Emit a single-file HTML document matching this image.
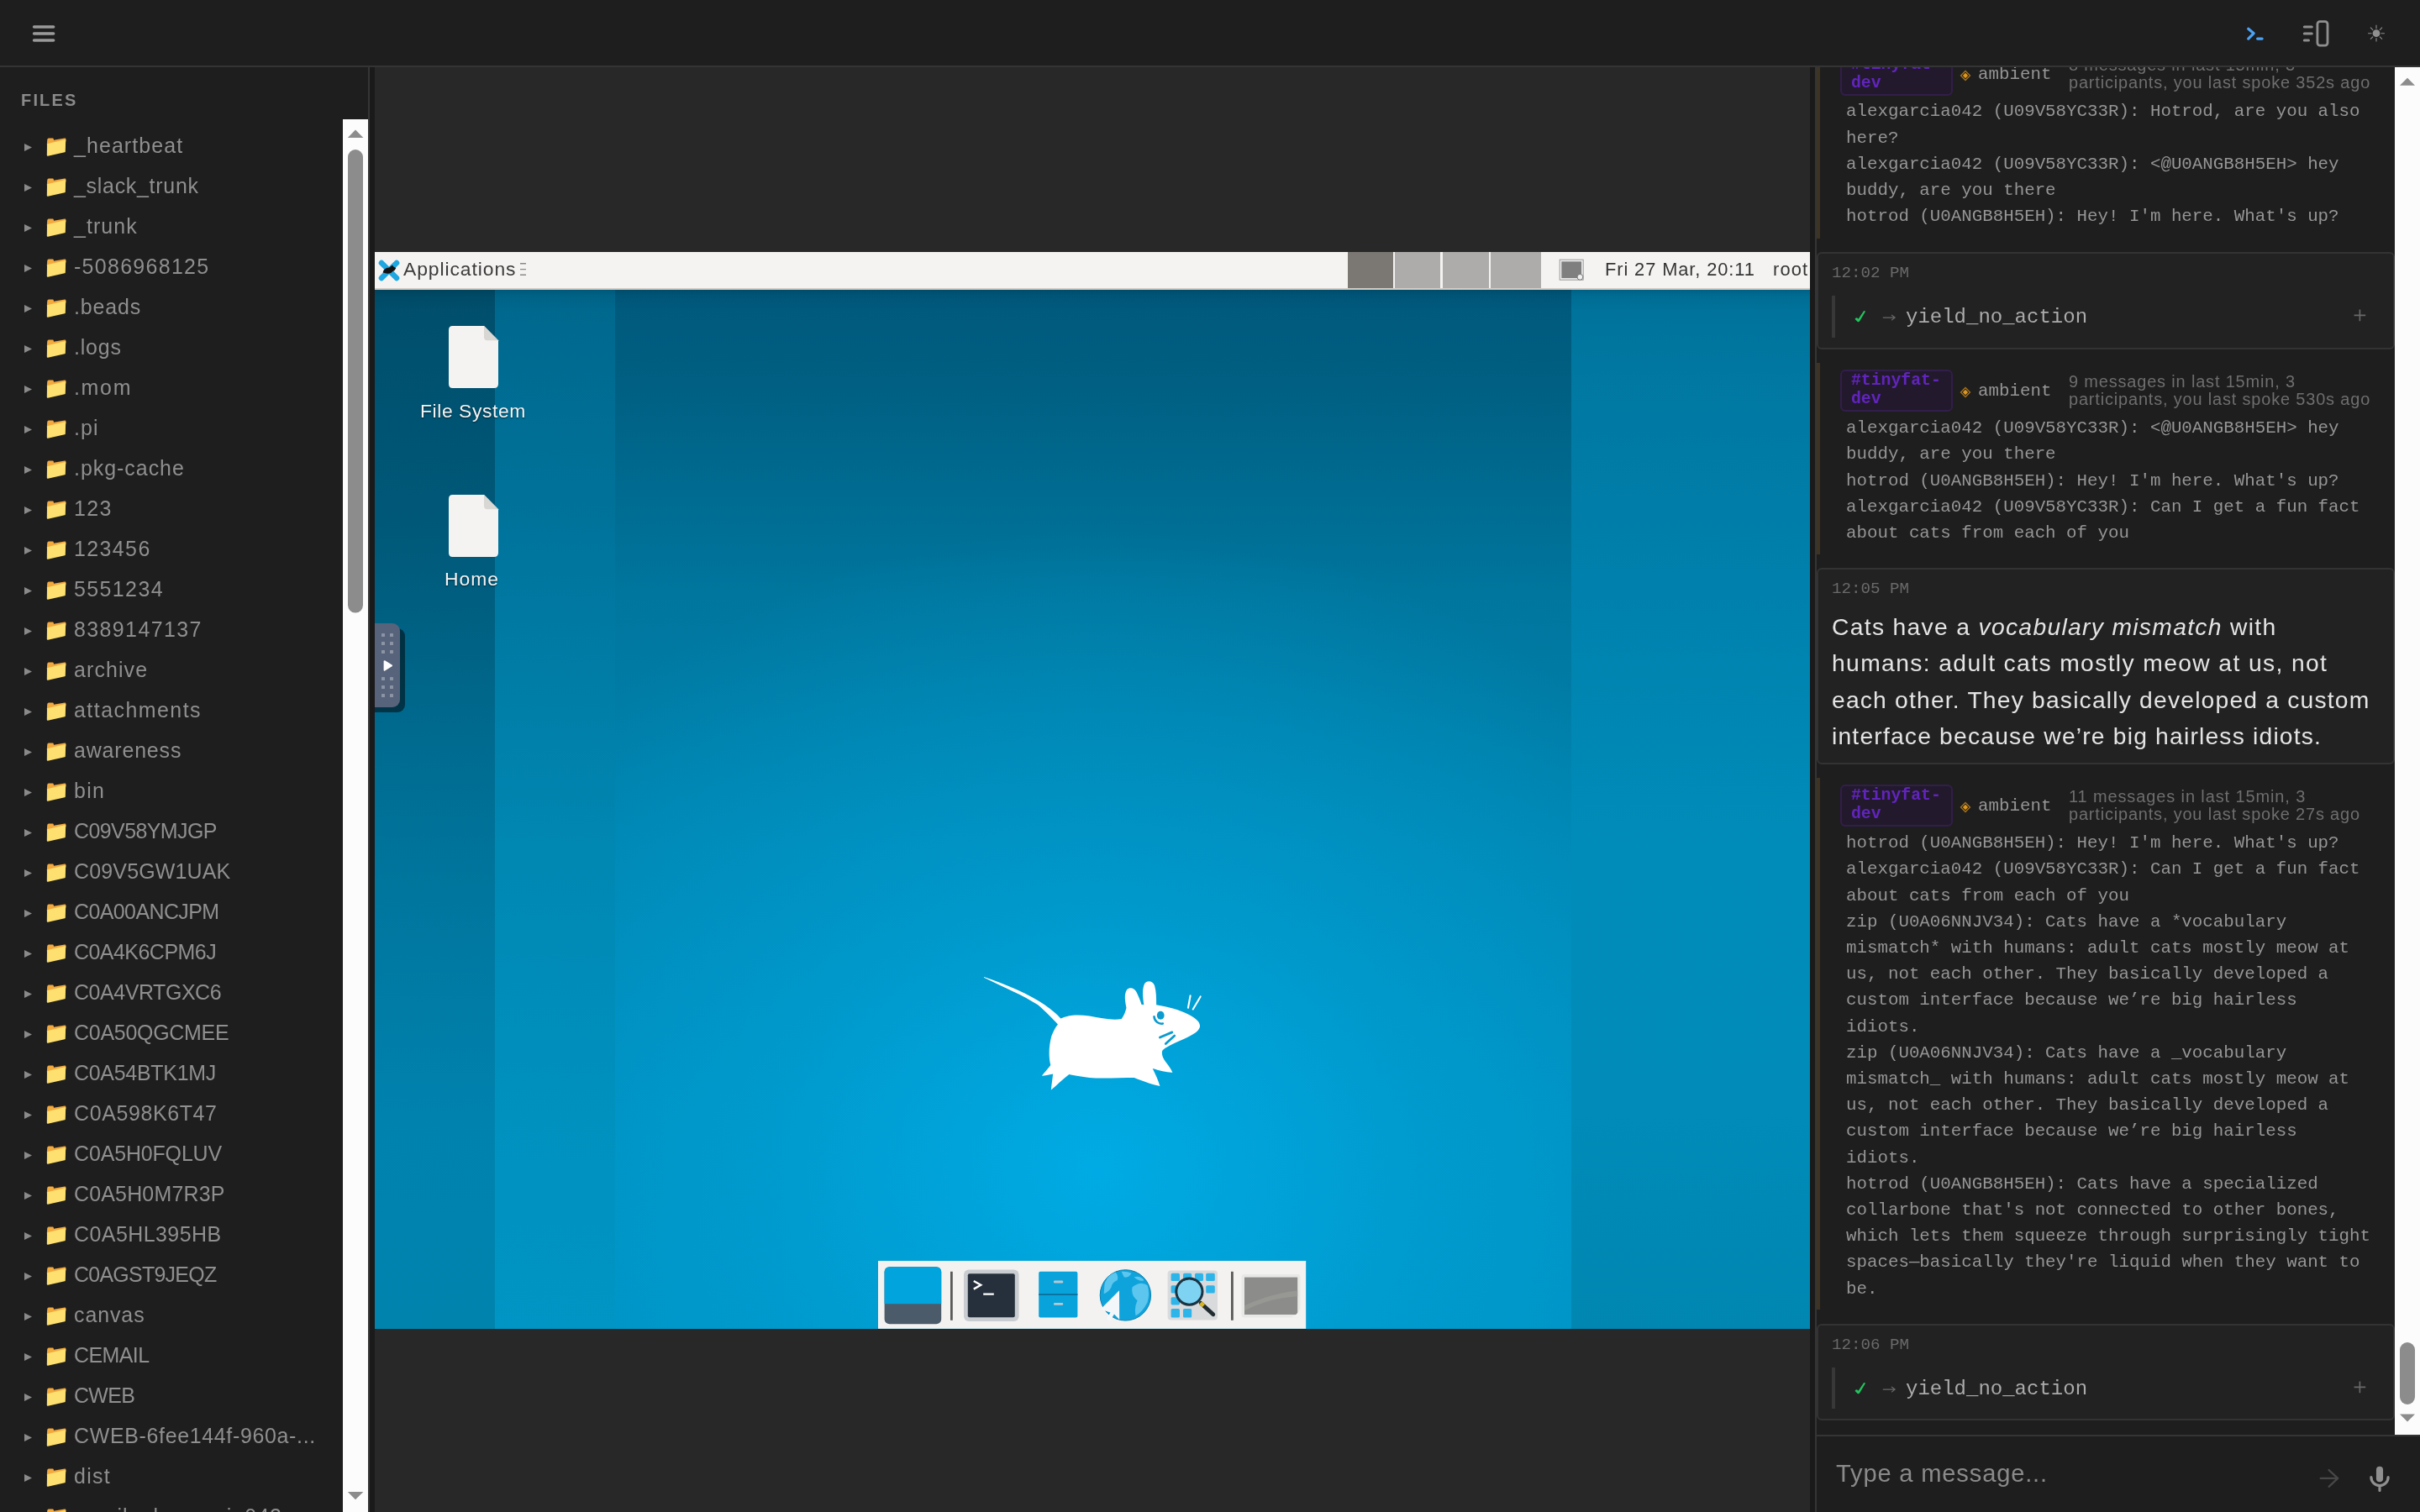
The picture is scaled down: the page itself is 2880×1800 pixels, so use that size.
<!DOCTYPE html><html><head><meta charset="utf-8"><style>
html,body{margin:0;padding:0;}
body{width:1440px;height:900px;overflow:hidden;background:#1f1f1f;position:relative;font-family:"Liberation Sans",sans-serif;}
@media (min-width:2000px){html{zoom:2}}
.a{position:absolute;box-sizing:border-box}
.t{position:absolute;white-space:pre;font-family:"Liberation Sans",sans-serif;will-change:transform}
.m{position:absolute;white-space:pre;font-family:"Liberation Mono",monospace;will-change:transform}
svg{position:absolute;overflow:visible}
</style></head><body>
<div class="a" style="left:0px;top:0px;width:1440px;height:40px;background:#1e1e1e;border-bottom:1px solid #343434"></div>
<svg style="left:0;top:0" width="40" height="40"><path d="M20.3 16h11.5M20.3 20h11.5M20.3 24h11.5" stroke="#9a9a9a" stroke-width="1.8" stroke-linecap="round"/></svg>
<svg style="left:1320px;top:0" width="120" height="40"><path d="M17.85 17.1L21.07 19.83L17.85 23.05M23.3 23.05h2.75" fill="none" stroke="#4aa3f5" stroke-width="1.6" stroke-linecap="round" stroke-linejoin="round"/><path d="M51.2 16h4.4M51.2 20h4.4M51.2 24h2.5" stroke="#8f8f8f" stroke-width="1.6" stroke-linecap="round"/><rect x="58.95" y="12.85" width="6.05" height="14.2" rx="1.5" fill="none" stroke="#8f8f8f" stroke-width="1.4"/><circle cx="94" cy="19.85" r="2.2" fill="#8f8f8f"/><path d="M94 14.9v2.2M94 22.6v2.2M89.05 19.85h2.2M96.75 19.85h2.2M90.5 16.35l1.55 1.55M95.95 21.8l1.55 1.55M97.5 16.35l-1.55 1.55M92.05 21.8l-1.55 1.55" stroke="#8f8f8f" stroke-width="0.55"/></svg>
<div class="a" style="left:0px;top:40px;width:219px;height:860px;background:#1e1e1e"></div>
<div class="a" style="left:219px;top:40px;width:1px;height:860px;background:#353535"></div>
<div class="a" style="left:220px;top:40px;width:3px;height:860px;background:#1a1a1a"></div>
<div class="t" style="left:12.70px;top:53.64px;font-size:9.98px;line-height:12px;letter-spacing:1.100px;color:#8a8a8a;font-weight:700;font-style:normal;">FILES</div>
<svg style="left:14.5px;top:85.45px" width="5" height="5"><path d="M0 0L4.5 2.25L0 4.5Z" fill="#8a8a8a"/></svg>
<svg style="left:27.5px;top:81.85px" width="12" height="11" viewBox="0 0 12 11"><path d="M0.4 4.2 L0.6 1.3 Q0.7 0.3 1.5 0.3 L3.9 0.2 Q4.3 0.2 4.4 0.7 L4.5 1.4 L11.0 0.3 Q11.7 0.2 11.7 0.9 L11.7 2.2 Z" fill="#f2a93e"/><path d="M0.5 3.6 L11.6 0.95 L11.4 8.1 Q11.4 8.5 11.0 8.6 L1.0 10.9 Q0.4 11.0 0.4 10.4 Z" fill="#fde06f"/></svg>
<div class="t" style="left:44.10px;top:78.53px;font-size:12.48px;line-height:16px;letter-spacing:0.542px;color:#8f8f8f;font-weight:400;font-style:normal;">_heartbeat</div>
<svg style="left:14.5px;top:109.45px" width="5" height="5"><path d="M0 0L4.5 2.25L0 4.5Z" fill="#8a8a8a"/></svg>
<svg style="left:27.5px;top:105.85px" width="12" height="11" viewBox="0 0 12 11"><path d="M0.4 4.2 L0.6 1.3 Q0.7 0.3 1.5 0.3 L3.9 0.2 Q4.3 0.2 4.4 0.7 L4.5 1.4 L11.0 0.3 Q11.7 0.2 11.7 0.9 L11.7 2.2 Z" fill="#f2a93e"/><path d="M0.5 3.6 L11.6 0.95 L11.4 8.1 Q11.4 8.5 11.0 8.6 L1.0 10.9 Q0.4 11.0 0.4 10.4 Z" fill="#fde06f"/></svg>
<div class="t" style="left:44.10px;top:102.53px;font-size:12.48px;line-height:16px;letter-spacing:0.358px;color:#8f8f8f;font-weight:400;font-style:normal;">_slack_trunk</div>
<svg style="left:14.5px;top:133.45px" width="5" height="5"><path d="M0 0L4.5 2.25L0 4.5Z" fill="#8a8a8a"/></svg>
<svg style="left:27.5px;top:129.85px" width="12" height="11" viewBox="0 0 12 11"><path d="M0.4 4.2 L0.6 1.3 Q0.7 0.3 1.5 0.3 L3.9 0.2 Q4.3 0.2 4.4 0.7 L4.5 1.4 L11.0 0.3 Q11.7 0.2 11.7 0.9 L11.7 2.2 Z" fill="#f2a93e"/><path d="M0.5 3.6 L11.6 0.95 L11.4 8.1 Q11.4 8.5 11.0 8.6 L1.0 10.9 Q0.4 11.0 0.4 10.4 Z" fill="#fde06f"/></svg>
<div class="t" style="left:44.10px;top:126.53px;font-size:12.48px;line-height:16px;letter-spacing:0.526px;color:#8f8f8f;font-weight:400;font-style:normal;">_trunk</div>
<svg style="left:14.5px;top:157.45px" width="5" height="5"><path d="M0 0L4.5 2.25L0 4.5Z" fill="#8a8a8a"/></svg>
<svg style="left:27.5px;top:153.85px" width="12" height="11" viewBox="0 0 12 11"><path d="M0.4 4.2 L0.6 1.3 Q0.7 0.3 1.5 0.3 L3.9 0.2 Q4.3 0.2 4.4 0.7 L4.5 1.4 L11.0 0.3 Q11.7 0.2 11.7 0.9 L11.7 2.2 Z" fill="#f2a93e"/><path d="M0.5 3.6 L11.6 0.95 L11.4 8.1 Q11.4 8.5 11.0 8.6 L1.0 10.9 Q0.4 11.0 0.4 10.4 Z" fill="#fde06f"/></svg>
<div class="t" style="left:44.10px;top:150.53px;font-size:12.48px;line-height:16px;letter-spacing:0.653px;color:#8f8f8f;font-weight:400;font-style:normal;">-5086968125</div>
<svg style="left:14.5px;top:181.45px" width="5" height="5"><path d="M0 0L4.5 2.25L0 4.5Z" fill="#8a8a8a"/></svg>
<svg style="left:27.5px;top:177.85px" width="12" height="11" viewBox="0 0 12 11"><path d="M0.4 4.2 L0.6 1.3 Q0.7 0.3 1.5 0.3 L3.9 0.2 Q4.3 0.2 4.4 0.7 L4.5 1.4 L11.0 0.3 Q11.7 0.2 11.7 0.9 L11.7 2.2 Z" fill="#f2a93e"/><path d="M0.5 3.6 L11.6 0.95 L11.4 8.1 Q11.4 8.5 11.0 8.6 L1.0 10.9 Q0.4 11.0 0.4 10.4 Z" fill="#fde06f"/></svg>
<div class="t" style="left:44.10px;top:174.53px;font-size:12.48px;line-height:16px;letter-spacing:0.435px;color:#8f8f8f;font-weight:400;font-style:normal;">.beads</div>
<svg style="left:14.5px;top:205.45px" width="5" height="5"><path d="M0 0L4.5 2.25L0 4.5Z" fill="#8a8a8a"/></svg>
<svg style="left:27.5px;top:201.85px" width="12" height="11" viewBox="0 0 12 11"><path d="M0.4 4.2 L0.6 1.3 Q0.7 0.3 1.5 0.3 L3.9 0.2 Q4.3 0.2 4.4 0.7 L4.5 1.4 L11.0 0.3 Q11.7 0.2 11.7 0.9 L11.7 2.2 Z" fill="#f2a93e"/><path d="M0.5 3.6 L11.6 0.95 L11.4 8.1 Q11.4 8.5 11.0 8.6 L1.0 10.9 Q0.4 11.0 0.4 10.4 Z" fill="#fde06f"/></svg>
<div class="t" style="left:44.10px;top:198.53px;font-size:12.48px;line-height:16px;letter-spacing:0.403px;color:#8f8f8f;font-weight:400;font-style:normal;">.logs</div>
<svg style="left:14.5px;top:229.45px" width="5" height="5"><path d="M0 0L4.5 2.25L0 4.5Z" fill="#8a8a8a"/></svg>
<svg style="left:27.5px;top:225.85px" width="12" height="11" viewBox="0 0 12 11"><path d="M0.4 4.2 L0.6 1.3 Q0.7 0.3 1.5 0.3 L3.9 0.2 Q4.3 0.2 4.4 0.7 L4.5 1.4 L11.0 0.3 Q11.7 0.2 11.7 0.9 L11.7 2.2 Z" fill="#f2a93e"/><path d="M0.5 3.6 L11.6 0.95 L11.4 8.1 Q11.4 8.5 11.0 8.6 L1.0 10.9 Q0.4 11.0 0.4 10.4 Z" fill="#fde06f"/></svg>
<div class="t" style="left:44.10px;top:222.53px;font-size:12.48px;line-height:16px;letter-spacing:0.844px;color:#8f8f8f;font-weight:400;font-style:normal;">.mom</div>
<svg style="left:14.5px;top:253.45px" width="5" height="5"><path d="M0 0L4.5 2.25L0 4.5Z" fill="#8a8a8a"/></svg>
<svg style="left:27.5px;top:249.85px" width="12" height="11" viewBox="0 0 12 11"><path d="M0.4 4.2 L0.6 1.3 Q0.7 0.3 1.5 0.3 L3.9 0.2 Q4.3 0.2 4.4 0.7 L4.5 1.4 L11.0 0.3 Q11.7 0.2 11.7 0.9 L11.7 2.2 Z" fill="#f2a93e"/><path d="M0.5 3.6 L11.6 0.95 L11.4 8.1 Q11.4 8.5 11.0 8.6 L1.0 10.9 Q0.4 11.0 0.4 10.4 Z" fill="#fde06f"/></svg>
<div class="t" style="left:44.10px;top:246.53px;font-size:12.48px;line-height:16px;letter-spacing:0.531px;color:#8f8f8f;font-weight:400;font-style:normal;">.pi</div>
<svg style="left:14.5px;top:277.45px" width="5" height="5"><path d="M0 0L4.5 2.25L0 4.5Z" fill="#8a8a8a"/></svg>
<svg style="left:27.5px;top:273.85px" width="12" height="11" viewBox="0 0 12 11"><path d="M0.4 4.2 L0.6 1.3 Q0.7 0.3 1.5 0.3 L3.9 0.2 Q4.3 0.2 4.4 0.7 L4.5 1.4 L11.0 0.3 Q11.7 0.2 11.7 0.9 L11.7 2.2 Z" fill="#f2a93e"/><path d="M0.5 3.6 L11.6 0.95 L11.4 8.1 Q11.4 8.5 11.0 8.6 L1.0 10.9 Q0.4 11.0 0.4 10.4 Z" fill="#fde06f"/></svg>
<div class="t" style="left:44.10px;top:270.53px;font-size:12.48px;line-height:16px;letter-spacing:0.487px;color:#8f8f8f;font-weight:400;font-style:normal;">.pkg-cache</div>
<svg style="left:14.5px;top:301.45px" width="5" height="5"><path d="M0 0L4.5 2.25L0 4.5Z" fill="#8a8a8a"/></svg>
<svg style="left:27.5px;top:297.85px" width="12" height="11" viewBox="0 0 12 11"><path d="M0.4 4.2 L0.6 1.3 Q0.7 0.3 1.5 0.3 L3.9 0.2 Q4.3 0.2 4.4 0.7 L4.5 1.4 L11.0 0.3 Q11.7 0.2 11.7 0.9 L11.7 2.2 Z" fill="#f2a93e"/><path d="M0.5 3.6 L11.6 0.95 L11.4 8.1 Q11.4 8.5 11.0 8.6 L1.0 10.9 Q0.4 11.0 0.4 10.4 Z" fill="#fde06f"/></svg>
<div class="t" style="left:44.10px;top:294.53px;font-size:12.48px;line-height:16px;letter-spacing:0.698px;color:#8f8f8f;font-weight:400;font-style:normal;">123</div>
<svg style="left:14.5px;top:325.45px" width="5" height="5"><path d="M0 0L4.5 2.25L0 4.5Z" fill="#8a8a8a"/></svg>
<svg style="left:27.5px;top:321.85px" width="12" height="11" viewBox="0 0 12 11"><path d="M0.4 4.2 L0.6 1.3 Q0.7 0.3 1.5 0.3 L3.9 0.2 Q4.3 0.2 4.4 0.7 L4.5 1.4 L11.0 0.3 Q11.7 0.2 11.7 0.9 L11.7 2.2 Z" fill="#f2a93e"/><path d="M0.5 3.6 L11.6 0.95 L11.4 8.1 Q11.4 8.5 11.0 8.6 L1.0 10.9 Q0.4 11.0 0.4 10.4 Z" fill="#fde06f"/></svg>
<div class="t" style="left:44.10px;top:318.53px;font-size:12.48px;line-height:16px;letter-spacing:0.701px;color:#8f8f8f;font-weight:400;font-style:normal;">123456</div>
<svg style="left:14.5px;top:349.45px" width="5" height="5"><path d="M0 0L4.5 2.25L0 4.5Z" fill="#8a8a8a"/></svg>
<svg style="left:27.5px;top:345.85px" width="12" height="11" viewBox="0 0 12 11"><path d="M0.4 4.2 L0.6 1.3 Q0.7 0.3 1.5 0.3 L3.9 0.2 Q4.3 0.2 4.4 0.7 L4.5 1.4 L11.0 0.3 Q11.7 0.2 11.7 0.9 L11.7 2.2 Z" fill="#f2a93e"/><path d="M0.5 3.6 L11.6 0.95 L11.4 8.1 Q11.4 8.5 11.0 8.6 L1.0 10.9 Q0.4 11.0 0.4 10.4 Z" fill="#fde06f"/></svg>
<div class="t" style="left:44.10px;top:342.53px;font-size:12.48px;line-height:16px;letter-spacing:0.701px;color:#8f8f8f;font-weight:400;font-style:normal;">5551234</div>
<svg style="left:14.5px;top:373.45px" width="5" height="5"><path d="M0 0L4.5 2.25L0 4.5Z" fill="#8a8a8a"/></svg>
<svg style="left:27.5px;top:369.85px" width="12" height="11" viewBox="0 0 12 11"><path d="M0.4 4.2 L0.6 1.3 Q0.7 0.3 1.5 0.3 L3.9 0.2 Q4.3 0.2 4.4 0.7 L4.5 1.4 L11.0 0.3 Q11.7 0.2 11.7 0.9 L11.7 2.2 Z" fill="#f2a93e"/><path d="M0.5 3.6 L11.6 0.95 L11.4 8.1 Q11.4 8.5 11.0 8.6 L1.0 10.9 Q0.4 11.0 0.4 10.4 Z" fill="#fde06f"/></svg>
<div class="t" style="left:44.10px;top:366.53px;font-size:12.48px;line-height:16px;letter-spacing:0.700px;color:#8f8f8f;font-weight:400;font-style:normal;">8389147137</div>
<svg style="left:14.5px;top:397.45px" width="5" height="5"><path d="M0 0L4.5 2.25L0 4.5Z" fill="#8a8a8a"/></svg>
<svg style="left:27.5px;top:393.85px" width="12" height="11" viewBox="0 0 12 11"><path d="M0.4 4.2 L0.6 1.3 Q0.7 0.3 1.5 0.3 L3.9 0.2 Q4.3 0.2 4.4 0.7 L4.5 1.4 L11.0 0.3 Q11.7 0.2 11.7 0.9 L11.7 2.2 Z" fill="#f2a93e"/><path d="M0.5 3.6 L11.6 0.95 L11.4 8.1 Q11.4 8.5 11.0 8.6 L1.0 10.9 Q0.4 11.0 0.4 10.4 Z" fill="#fde06f"/></svg>
<div class="t" style="left:44.10px;top:390.53px;font-size:12.48px;line-height:16px;letter-spacing:0.549px;color:#8f8f8f;font-weight:400;font-style:normal;">archive</div>
<svg style="left:14.5px;top:421.45px" width="5" height="5"><path d="M0 0L4.5 2.25L0 4.5Z" fill="#8a8a8a"/></svg>
<svg style="left:27.5px;top:417.85px" width="12" height="11" viewBox="0 0 12 11"><path d="M0.4 4.2 L0.6 1.3 Q0.7 0.3 1.5 0.3 L3.9 0.2 Q4.3 0.2 4.4 0.7 L4.5 1.4 L11.0 0.3 Q11.7 0.2 11.7 0.9 L11.7 2.2 Z" fill="#f2a93e"/><path d="M0.5 3.6 L11.6 0.95 L11.4 8.1 Q11.4 8.5 11.0 8.6 L1.0 10.9 Q0.4 11.0 0.4 10.4 Z" fill="#fde06f"/></svg>
<div class="t" style="left:44.10px;top:414.53px;font-size:12.48px;line-height:16px;letter-spacing:0.732px;color:#8f8f8f;font-weight:400;font-style:normal;">attachments</div>
<svg style="left:14.5px;top:445.45px" width="5" height="5"><path d="M0 0L4.5 2.25L0 4.5Z" fill="#8a8a8a"/></svg>
<svg style="left:27.5px;top:441.85px" width="12" height="11" viewBox="0 0 12 11"><path d="M0.4 4.2 L0.6 1.3 Q0.7 0.3 1.5 0.3 L3.9 0.2 Q4.3 0.2 4.4 0.7 L4.5 1.4 L11.0 0.3 Q11.7 0.2 11.7 0.9 L11.7 2.2 Z" fill="#f2a93e"/><path d="M0.5 3.6 L11.6 0.95 L11.4 8.1 Q11.4 8.5 11.0 8.6 L1.0 10.9 Q0.4 11.0 0.4 10.4 Z" fill="#fde06f"/></svg>
<div class="t" style="left:44.10px;top:438.53px;font-size:12.48px;line-height:16px;letter-spacing:0.418px;color:#8f8f8f;font-weight:400;font-style:normal;">awareness</div>
<svg style="left:14.5px;top:469.45px" width="5" height="5"><path d="M0 0L4.5 2.25L0 4.5Z" fill="#8a8a8a"/></svg>
<svg style="left:27.5px;top:465.85px" width="12" height="11" viewBox="0 0 12 11"><path d="M0.4 4.2 L0.6 1.3 Q0.7 0.3 1.5 0.3 L3.9 0.2 Q4.3 0.2 4.4 0.7 L4.5 1.4 L11.0 0.3 Q11.7 0.2 11.7 0.9 L11.7 2.2 Z" fill="#f2a93e"/><path d="M0.5 3.6 L11.6 0.95 L11.4 8.1 Q11.4 8.5 11.0 8.6 L1.0 10.9 Q0.4 11.0 0.4 10.4 Z" fill="#fde06f"/></svg>
<div class="t" style="left:44.10px;top:462.53px;font-size:12.48px;line-height:16px;letter-spacing:0.641px;color:#8f8f8f;font-weight:400;font-style:normal;">bin</div>
<svg style="left:14.5px;top:493.45px" width="5" height="5"><path d="M0 0L4.5 2.25L0 4.5Z" fill="#8a8a8a"/></svg>
<svg style="left:27.5px;top:489.85px" width="12" height="11" viewBox="0 0 12 11"><path d="M0.4 4.2 L0.6 1.3 Q0.7 0.3 1.5 0.3 L3.9 0.2 Q4.3 0.2 4.4 0.7 L4.5 1.4 L11.0 0.3 Q11.7 0.2 11.7 0.9 L11.7 2.2 Z" fill="#f2a93e"/><path d="M0.5 3.6 L11.6 0.95 L11.4 8.1 Q11.4 8.5 11.0 8.6 L1.0 10.9 Q0.4 11.0 0.4 10.4 Z" fill="#fde06f"/></svg>
<div class="t" style="left:44.10px;top:486.53px;font-size:12.48px;line-height:16px;letter-spacing:-0.284px;color:#8f8f8f;font-weight:400;font-style:normal;">C09V58YMJGP</div>
<svg style="left:14.5px;top:517.45px" width="5" height="5"><path d="M0 0L4.5 2.25L0 4.5Z" fill="#8a8a8a"/></svg>
<svg style="left:27.5px;top:513.85px" width="12" height="11" viewBox="0 0 12 11"><path d="M0.4 4.2 L0.6 1.3 Q0.7 0.3 1.5 0.3 L3.9 0.2 Q4.3 0.2 4.4 0.7 L4.5 1.4 L11.0 0.3 Q11.7 0.2 11.7 0.9 L11.7 2.2 Z" fill="#f2a93e"/><path d="M0.5 3.6 L11.6 0.95 L11.4 8.1 Q11.4 8.5 11.0 8.6 L1.0 10.9 Q0.4 11.0 0.4 10.4 Z" fill="#fde06f"/></svg>
<div class="t" style="left:44.10px;top:510.53px;font-size:12.48px;line-height:16px;letter-spacing:0.089px;color:#8f8f8f;font-weight:400;font-style:normal;">C09V5GW1UAK</div>
<svg style="left:14.5px;top:541.45px" width="5" height="5"><path d="M0 0L4.5 2.25L0 4.5Z" fill="#8a8a8a"/></svg>
<svg style="left:27.5px;top:537.85px" width="12" height="11" viewBox="0 0 12 11"><path d="M0.4 4.2 L0.6 1.3 Q0.7 0.3 1.5 0.3 L3.9 0.2 Q4.3 0.2 4.4 0.7 L4.5 1.4 L11.0 0.3 Q11.7 0.2 11.7 0.9 L11.7 2.2 Z" fill="#f2a93e"/><path d="M0.5 3.6 L11.6 0.95 L11.4 8.1 Q11.4 8.5 11.0 8.6 L1.0 10.9 Q0.4 11.0 0.4 10.4 Z" fill="#fde06f"/></svg>
<div class="t" style="left:44.10px;top:534.53px;font-size:12.48px;line-height:16px;letter-spacing:-0.291px;color:#8f8f8f;font-weight:400;font-style:normal;">C0A00ANCJPM</div>
<svg style="left:14.5px;top:565.45px" width="5" height="5"><path d="M0 0L4.5 2.25L0 4.5Z" fill="#8a8a8a"/></svg>
<svg style="left:27.5px;top:561.85px" width="12" height="11" viewBox="0 0 12 11"><path d="M0.4 4.2 L0.6 1.3 Q0.7 0.3 1.5 0.3 L3.9 0.2 Q4.3 0.2 4.4 0.7 L4.5 1.4 L11.0 0.3 Q11.7 0.2 11.7 0.9 L11.7 2.2 Z" fill="#f2a93e"/><path d="M0.5 3.6 L11.6 0.95 L11.4 8.1 Q11.4 8.5 11.0 8.6 L1.0 10.9 Q0.4 11.0 0.4 10.4 Z" fill="#fde06f"/></svg>
<div class="t" style="left:44.10px;top:558.53px;font-size:12.48px;line-height:16px;letter-spacing:-0.256px;color:#8f8f8f;font-weight:400;font-style:normal;">C0A4K6CPM6J</div>
<svg style="left:14.5px;top:589.45px" width="5" height="5"><path d="M0 0L4.5 2.25L0 4.5Z" fill="#8a8a8a"/></svg>
<svg style="left:27.5px;top:585.85px" width="12" height="11" viewBox="0 0 12 11"><path d="M0.4 4.2 L0.6 1.3 Q0.7 0.3 1.5 0.3 L3.9 0.2 Q4.3 0.2 4.4 0.7 L4.5 1.4 L11.0 0.3 Q11.7 0.2 11.7 0.9 L11.7 2.2 Z" fill="#f2a93e"/><path d="M0.5 3.6 L11.6 0.95 L11.4 8.1 Q11.4 8.5 11.0 8.6 L1.0 10.9 Q0.4 11.0 0.4 10.4 Z" fill="#fde06f"/></svg>
<div class="t" style="left:44.10px;top:582.53px;font-size:12.48px;line-height:16px;letter-spacing:-0.212px;color:#8f8f8f;font-weight:400;font-style:normal;">C0A4VRTGXC6</div>
<svg style="left:14.5px;top:613.45px" width="5" height="5"><path d="M0 0L4.5 2.25L0 4.5Z" fill="#8a8a8a"/></svg>
<svg style="left:27.5px;top:609.85px" width="12" height="11" viewBox="0 0 12 11"><path d="M0.4 4.2 L0.6 1.3 Q0.7 0.3 1.5 0.3 L3.9 0.2 Q4.3 0.2 4.4 0.7 L4.5 1.4 L11.0 0.3 Q11.7 0.2 11.7 0.9 L11.7 2.2 Z" fill="#f2a93e"/><path d="M0.5 3.6 L11.6 0.95 L11.4 8.1 Q11.4 8.5 11.0 8.6 L1.0 10.9 Q0.4 11.0 0.4 10.4 Z" fill="#fde06f"/></svg>
<div class="t" style="left:44.10px;top:606.53px;font-size:12.48px;line-height:16px;letter-spacing:-0.128px;color:#8f8f8f;font-weight:400;font-style:normal;">C0A50QGCMEE</div>
<svg style="left:14.5px;top:637.45px" width="5" height="5"><path d="M0 0L4.5 2.25L0 4.5Z" fill="#8a8a8a"/></svg>
<svg style="left:27.5px;top:633.85px" width="12" height="11" viewBox="0 0 12 11"><path d="M0.4 4.2 L0.6 1.3 Q0.7 0.3 1.5 0.3 L3.9 0.2 Q4.3 0.2 4.4 0.7 L4.5 1.4 L11.0 0.3 Q11.7 0.2 11.7 0.9 L11.7 2.2 Z" fill="#f2a93e"/><path d="M0.5 3.6 L11.6 0.95 L11.4 8.1 Q11.4 8.5 11.0 8.6 L1.0 10.9 Q0.4 11.0 0.4 10.4 Z" fill="#fde06f"/></svg>
<div class="t" style="left:44.10px;top:630.53px;font-size:12.48px;line-height:16px;letter-spacing:-0.135px;color:#8f8f8f;font-weight:400;font-style:normal;">C0A54BTK1MJ</div>
<svg style="left:14.5px;top:661.45px" width="5" height="5"><path d="M0 0L4.5 2.25L0 4.5Z" fill="#8a8a8a"/></svg>
<svg style="left:27.5px;top:657.85px" width="12" height="11" viewBox="0 0 12 11"><path d="M0.4 4.2 L0.6 1.3 Q0.7 0.3 1.5 0.3 L3.9 0.2 Q4.3 0.2 4.4 0.7 L4.5 1.4 L11.0 0.3 Q11.7 0.2 11.7 0.9 L11.7 2.2 Z" fill="#f2a93e"/><path d="M0.5 3.6 L11.6 0.95 L11.4 8.1 Q11.4 8.5 11.0 8.6 L1.0 10.9 Q0.4 11.0 0.4 10.4 Z" fill="#fde06f"/></svg>
<div class="t" style="left:44.10px;top:654.53px;font-size:12.48px;line-height:16px;letter-spacing:0.312px;color:#8f8f8f;font-weight:400;font-style:normal;">C0A598K6T47</div>
<svg style="left:14.5px;top:685.45px" width="5" height="5"><path d="M0 0L4.5 2.25L0 4.5Z" fill="#8a8a8a"/></svg>
<svg style="left:27.5px;top:681.85px" width="12" height="11" viewBox="0 0 12 11"><path d="M0.4 4.2 L0.6 1.3 Q0.7 0.3 1.5 0.3 L3.9 0.2 Q4.3 0.2 4.4 0.7 L4.5 1.4 L11.0 0.3 Q11.7 0.2 11.7 0.9 L11.7 2.2 Z" fill="#f2a93e"/><path d="M0.5 3.6 L11.6 0.95 L11.4 8.1 Q11.4 8.5 11.0 8.6 L1.0 10.9 Q0.4 11.0 0.4 10.4 Z" fill="#fde06f"/></svg>
<div class="t" style="left:44.10px;top:678.53px;font-size:12.48px;line-height:16px;letter-spacing:-0.068px;color:#8f8f8f;font-weight:400;font-style:normal;">C0A5H0FQLUV</div>
<svg style="left:14.5px;top:709.45px" width="5" height="5"><path d="M0 0L4.5 2.25L0 4.5Z" fill="#8a8a8a"/></svg>
<svg style="left:27.5px;top:705.85px" width="12" height="11" viewBox="0 0 12 11"><path d="M0.4 4.2 L0.6 1.3 Q0.7 0.3 1.5 0.3 L3.9 0.2 Q4.3 0.2 4.4 0.7 L4.5 1.4 L11.0 0.3 Q11.7 0.2 11.7 0.9 L11.7 2.2 Z" fill="#f2a93e"/><path d="M0.5 3.6 L11.6 0.95 L11.4 8.1 Q11.4 8.5 11.0 8.6 L1.0 10.9 Q0.4 11.0 0.4 10.4 Z" fill="#fde06f"/></svg>
<div class="t" style="left:44.10px;top:702.53px;font-size:12.48px;line-height:16px;letter-spacing:0.091px;color:#8f8f8f;font-weight:400;font-style:normal;">C0A5H0M7R3P</div>
<svg style="left:14.5px;top:733.45px" width="5" height="5"><path d="M0 0L4.5 2.25L0 4.5Z" fill="#8a8a8a"/></svg>
<svg style="left:27.5px;top:729.85px" width="12" height="11" viewBox="0 0 12 11"><path d="M0.4 4.2 L0.6 1.3 Q0.7 0.3 1.5 0.3 L3.9 0.2 Q4.3 0.2 4.4 0.7 L4.5 1.4 L11.0 0.3 Q11.7 0.2 11.7 0.9 L11.7 2.2 Z" fill="#f2a93e"/><path d="M0.5 3.6 L11.6 0.95 L11.4 8.1 Q11.4 8.5 11.0 8.6 L1.0 10.9 Q0.4 11.0 0.4 10.4 Z" fill="#fde06f"/></svg>
<div class="t" style="left:44.10px;top:726.53px;font-size:12.48px;line-height:16px;letter-spacing:0.224px;color:#8f8f8f;font-weight:400;font-style:normal;">C0A5HL395HB</div>
<svg style="left:14.5px;top:757.45px" width="5" height="5"><path d="M0 0L4.5 2.25L0 4.5Z" fill="#8a8a8a"/></svg>
<svg style="left:27.5px;top:753.85px" width="12" height="11" viewBox="0 0 12 11"><path d="M0.4 4.2 L0.6 1.3 Q0.7 0.3 1.5 0.3 L3.9 0.2 Q4.3 0.2 4.4 0.7 L4.5 1.4 L11.0 0.3 Q11.7 0.2 11.7 0.9 L11.7 2.2 Z" fill="#f2a93e"/><path d="M0.5 3.6 L11.6 0.95 L11.4 8.1 Q11.4 8.5 11.0 8.6 L1.0 10.9 Q0.4 11.0 0.4 10.4 Z" fill="#fde06f"/></svg>
<div class="t" style="left:44.10px;top:750.53px;font-size:12.48px;line-height:16px;letter-spacing:-0.365px;color:#8f8f8f;font-weight:400;font-style:normal;">C0AGST9JEQZ</div>
<svg style="left:14.5px;top:781.45px" width="5" height="5"><path d="M0 0L4.5 2.25L0 4.5Z" fill="#8a8a8a"/></svg>
<svg style="left:27.5px;top:777.85px" width="12" height="11" viewBox="0 0 12 11"><path d="M0.4 4.2 L0.6 1.3 Q0.7 0.3 1.5 0.3 L3.9 0.2 Q4.3 0.2 4.4 0.7 L4.5 1.4 L11.0 0.3 Q11.7 0.2 11.7 0.9 L11.7 2.2 Z" fill="#f2a93e"/><path d="M0.5 3.6 L11.6 0.95 L11.4 8.1 Q11.4 8.5 11.0 8.6 L1.0 10.9 Q0.4 11.0 0.4 10.4 Z" fill="#fde06f"/></svg>
<div class="t" style="left:44.10px;top:774.53px;font-size:12.48px;line-height:16px;letter-spacing:0.458px;color:#8f8f8f;font-weight:400;font-style:normal;">canvas</div>
<svg style="left:14.5px;top:805.45px" width="5" height="5"><path d="M0 0L4.5 2.25L0 4.5Z" fill="#8a8a8a"/></svg>
<svg style="left:27.5px;top:801.85px" width="12" height="11" viewBox="0 0 12 11"><path d="M0.4 4.2 L0.6 1.3 Q0.7 0.3 1.5 0.3 L3.9 0.2 Q4.3 0.2 4.4 0.7 L4.5 1.4 L11.0 0.3 Q11.7 0.2 11.7 0.9 L11.7 2.2 Z" fill="#f2a93e"/><path d="M0.5 3.6 L11.6 0.95 L11.4 8.1 Q11.4 8.5 11.0 8.6 L1.0 10.9 Q0.4 11.0 0.4 10.4 Z" fill="#fde06f"/></svg>
<div class="t" style="left:44.10px;top:798.53px;font-size:12.48px;line-height:16px;letter-spacing:-0.281px;color:#8f8f8f;font-weight:400;font-style:normal;">CEMAIL</div>
<svg style="left:14.5px;top:829.45px" width="5" height="5"><path d="M0 0L4.5 2.25L0 4.5Z" fill="#8a8a8a"/></svg>
<svg style="left:27.5px;top:825.85px" width="12" height="11" viewBox="0 0 12 11"><path d="M0.4 4.2 L0.6 1.3 Q0.7 0.3 1.5 0.3 L3.9 0.2 Q4.3 0.2 4.4 0.7 L4.5 1.4 L11.0 0.3 Q11.7 0.2 11.7 0.9 L11.7 2.2 Z" fill="#f2a93e"/><path d="M0.5 3.6 L11.6 0.95 L11.4 8.1 Q11.4 8.5 11.0 8.6 L1.0 10.9 Q0.4 11.0 0.4 10.4 Z" fill="#fde06f"/></svg>
<div class="t" style="left:44.10px;top:822.53px;font-size:12.48px;line-height:16px;letter-spacing:-0.336px;color:#8f8f8f;font-weight:400;font-style:normal;">CWEB</div>
<svg style="left:14.5px;top:853.45px" width="5" height="5"><path d="M0 0L4.5 2.25L0 4.5Z" fill="#8a8a8a"/></svg>
<svg style="left:27.5px;top:849.85px" width="12" height="11" viewBox="0 0 12 11"><path d="M0.4 4.2 L0.6 1.3 Q0.7 0.3 1.5 0.3 L3.9 0.2 Q4.3 0.2 4.4 0.7 L4.5 1.4 L11.0 0.3 Q11.7 0.2 11.7 0.9 L11.7 2.2 Z" fill="#f2a93e"/><path d="M0.5 3.6 L11.6 0.95 L11.4 8.1 Q11.4 8.5 11.0 8.6 L1.0 10.9 Q0.4 11.0 0.4 10.4 Z" fill="#fde06f"/></svg>
<div class="t" style="left:44.10px;top:846.53px;font-size:12.48px;line-height:16px;letter-spacing:0.333px;color:#8f8f8f;font-weight:400;font-style:normal;">CWEB-6fee144f-960a-...</div>
<svg style="left:14.5px;top:877.45px" width="5" height="5"><path d="M0 0L4.5 2.25L0 4.5Z" fill="#8a8a8a"/></svg>
<svg style="left:27.5px;top:873.85px" width="12" height="11" viewBox="0 0 12 11"><path d="M0.4 4.2 L0.6 1.3 Q0.7 0.3 1.5 0.3 L3.9 0.2 Q4.3 0.2 4.4 0.7 L4.5 1.4 L11.0 0.3 Q11.7 0.2 11.7 0.9 L11.7 2.2 Z" fill="#f2a93e"/><path d="M0.5 3.6 L11.6 0.95 L11.4 8.1 Q11.4 8.5 11.0 8.6 L1.0 10.9 Q0.4 11.0 0.4 10.4 Z" fill="#fde06f"/></svg>
<div class="t" style="left:44.10px;top:870.53px;font-size:12.48px;line-height:16px;letter-spacing:0.629px;color:#8f8f8f;font-weight:400;font-style:normal;">dist</div>
<svg style="left:14.5px;top:901.45px" width="5" height="5"><path d="M0 0L4.5 2.25L0 4.5Z" fill="#8a8a8a"/></svg>
<svg style="left:27.5px;top:897.85px" width="12" height="11" viewBox="0 0 12 11"><path d="M0.4 4.2 L0.6 1.3 Q0.7 0.3 1.5 0.3 L3.9 0.2 Q4.3 0.2 4.4 0.7 L4.5 1.4 L11.0 0.3 Q11.7 0.2 11.7 0.9 L11.7 2.2 Z" fill="#f2a93e"/><path d="M0.5 3.6 L11.6 0.95 L11.4 8.1 Q11.4 8.5 11.0 8.6 L1.0 10.9 Q0.4 11.0 0.4 10.4 Z" fill="#fde06f"/></svg>
<div class="t" style="left:44.10px;top:894.53px;font-size:12.48px;line-height:16px;letter-spacing:0.501px;color:#8f8f8f;font-weight:400;font-style:normal;">email_alexgarcia042</div>
<div class="a" style="left:204px;top:71px;width:15px;height:829px;background:#fcfcfc"></div>
<svg style="left:204px;top:71px" width="15" height="829"><path d="M2.9 11L7.5 6.3L12.2 11Z" fill="#8c8c8c"/><rect x="3" y="18" width="9" height="275.8" rx="4.5" fill="#8c8c8c"/><path d="M2.9 817L7.5 821.6L12.2 817Z" fill="#8c8c8c"/></svg>
<div class="a" style="left:223px;top:40px;width:854px;height:860px;background:#282828"></div>
<div class="a" style="left:1077px;top:40px;width:3px;height:860px;background:#1a1a1a"></div>
<div class="a" style="left:1080px;top:40px;width:1px;height:860px;background:#353535"></div>
<div class="a" style="left:223px;top:150px;width:854px;height:641px;overflow:hidden;background:#0088b8">
<div class="a" style="left:0;top:0;width:71.5px;height:641px;background:linear-gradient(#004c69 0%, #005878 25%, #00739a 55%, #0082ae 80%, #0084ae 100%)"></div>
<div class="a" style="left:71.5px;top:0;width:71.5px;height:641px;background:linear-gradient(#00658a 0%, #00739b 25%, #0087b2 55%, #0091bf 80%, #0095c4 100%)"></div>
<div class="a" style="left:143px;top:0;width:569px;height:641px;background:radial-gradient(ellipse 430px 380px at 287px 545px, rgba(0,172,230,0.95) 0%, rgba(0,165,220,0.55) 45%, rgba(0,150,205,0) 100%),linear-gradient(#00567a 0%, #005f82 12%, #00769e 32%, #0084b0 55%, #008dbc 80%, #008fbf 100%)"></div>
<div class="a" style="left:712px;top:0;width:142px;height:641px;background:linear-gradient(#006e96 0%, #0078a2 12%, #0080ac 30%, #008cb9 55%, #008bb8 80%, #0086b1 100%)"></div>
<div class="a" style="left:0;top:22.6px;width:854px;height:12px;background:linear-gradient(rgba(0,10,20,0.16),rgba(0,0,0,0.05) 30%,rgba(0,0,0,0))"></div>
</div>
<div class="a" style="left:223px;top:150px;width:854px;height:22.6px;background:#f4f3f1;border-bottom:1px solid #d2ccc4"></div>
<svg style="left:225px;top:154.5px" width="13" height="13" viewBox="0 0 13 13"><path d="M2 2 L11 11 M11 2 L2 11" stroke="#1ea7e1" stroke-width="3.3" stroke-linecap="round"/><path d="M2.8 7.8 Q3.3 4.8 6.6 4.7 L8.5 3.3 L9.1 4.3 L10.7 5.0 Q10 6.7 8.7 7.0 Q7.6 8.7 5 8.3 Z" fill="#111"/></svg>
<div class="t" style="left:240.00px;top:153.24px;font-size:11.44px;line-height:14px;letter-spacing:0.460px;color:#3b3b3b;font-weight:400;font-style:normal;">Applications</div>
<svg style="left:309.5px;top:156px" width="4" height="9"><path d="M0 0.9h3.5M0 4.3h3.5M0 7.6h3.5" stroke="#8a8a8a" stroke-width="0.7"/></svg>
<div class="a" style="left:802px;top:150px;width:27px;height:21.6px;background:#7b7873"></div>
<div class="a" style="left:830px;top:150px;width:27px;height:21.6px;background:#adacaa"></div>
<div class="a" style="left:858.5px;top:150px;width:27.5px;height:21.6px;background:#adacaa"></div>
<div class="a" style="left:887px;top:150px;width:30px;height:21.6px;background:#adacaa"></div>
<svg style="left:928px;top:154.5px" width="15" height="13" viewBox="0 0 15 13"><rect x="0.6" y="0.6" width="13" height="11" fill="#7f7f7f" stroke="#f0f0f0" stroke-width="1.1"/><rect x="0.1" y="0.1" width="14" height="12" fill="none" stroke="#9a9a9a" stroke-width="0.5"/><circle cx="12.2" cy="10.4" r="1.7" fill="#f0f0f0" stroke="#777" stroke-width="0.5"/></svg>
<div class="t" style="left:955.00px;top:153.42px;font-size:10.92px;line-height:14px;letter-spacing:0.450px;color:#353535;font-weight:400;font-style:normal;">Fri 27 Mar, 20:11</div>
<div class="t" style="left:1055.00px;top:153.42px;font-size:10.92px;line-height:14px;letter-spacing:0.566px;color:#353535;font-weight:400;font-style:normal;">root</div>
<svg style="left:267px;top:194px" width="30" height="37" viewBox="0 0 30 37"><path d="M2.3 0 H21 L29.5 8.6 V34.5 Q29.5 37 27 37 H2.3 Q0 37 0 34.5 V2.5 Q0 0 2.3 0Z" fill="#f4f3f1"/><path d="M21 0 L29.5 8.6 H23 Q21 8.6 21 6.6Z" fill="#d9d7d4"/></svg>
<svg style="left:267px;top:294.5px" width="30" height="37" viewBox="0 0 30 37"><path d="M2.3 0 H21 L29.5 8.6 V34.5 Q29.5 37 27 37 H2.3 Q0 37 0 34.5 V2.5 Q0 0 2.3 0Z" fill="#f4f3f1"/><path d="M21 0 L29.5 8.6 H23 Q21 8.6 21 6.6Z" fill="#d9d7d4"/></svg>
<div class="t" style="left:249.80px;top:237.54px;font-size:11.44px;line-height:14px;letter-spacing:0.290px;color:#f4f4f4;font-weight:400;font-style:normal;text-shadow:0 0.5px 1px rgba(0,0,0,0.6)">File System</div>
<div class="t" style="left:264.30px;top:337.54px;font-size:11.44px;line-height:14px;letter-spacing:0.492px;color:#f4f4f4;font-weight:400;font-style:normal;text-shadow:0 0.5px 1px rgba(0,0,0,0.6)">Home</div>
<svg style="left:580px;top:575px" width="140" height="80" viewBox="0 0 2420 1383"><path fill="#fff" d="M95 112 C330 190 560 290 720 400 C790 450 850 500 885 540 C960 505 1060 495 1180 515 C1300 540 1420 560 1510 545 C1540 500 1550 470 1560 430 C1545 360 1535 290 1565 245 C1595 215 1640 225 1665 270 C1690 320 1705 360 1715 395 L1740 400 C1730 330 1720 240 1745 185 C1770 145 1830 150 1850 200 C1868 260 1868 330 1868 400 C1990 420 2110 450 2200 500 C2290 545 2325 590 2315 630 C2300 680 2220 720 2110 770 C2030 805 1960 840 1930 870 C1920 900 1930 940 1960 980 C1990 1020 2020 1060 2035 1095 C1990 1100 1900 1075 1830 1055 C1860 1120 1890 1180 1905 1235 C1840 1225 1740 1190 1640 1150 C1500 1150 1300 1160 1180 1150 C1100 1140 1020 1125 970 1115 C900 1170 840 1230 785 1275 C790 1220 800 1160 805 1110 C760 1120 720 1130 690 1130 C720 1090 760 1050 780 1020 C760 940 760 830 790 720 C810 670 830 630 855 600 C800 540 740 480 650 400 C500 300 300 220 95 118 Z"/><ellipse cx="1912" cy="508" rx="38" ry="44" fill="#0a9bd0"/><path d="M1845 520 C1850 570 1890 600 1935 592" fill="none" stroke="#0a9bd0" stroke-width="22" stroke-linecap="round"/><path d="M1905 735 L2030 682 M1965 800 L2055 718" stroke="#0a9bd0" stroke-width="24" stroke-linecap="round"/><path d="M2195 430 L2218 305 M2245 445 L2322 315" stroke="#fff" stroke-width="18" stroke-linecap="round"/></svg>
<svg style="left:522.7px;top:750.4px" width="254.6" height="40.4" viewBox="522.7 750.4 254.6 40.4"><rect x="522.7" y="750.4" width="254.6" height="40.4" fill="#f3f2f0"/><rect x="526.5" y="754" width="33.8" height="34" rx="3" fill="#4b5b69"/><path d="M526.5 776 V757 Q526.5 754 529.5 754 H557.3 Q560.3 754 560.3 757 V776Z" fill="#02a4de"/><rect x="565.7" y="756.8" width="1.4" height="29" fill="#5a5a5a"/><rect x="573.7" y="755.7" width="32.8" height="30.7" rx="3" fill="#c9cdd2"/><rect x="576.1" y="758" width="28" height="26" rx="1" fill="#26303c"/><path d="M579.6 762.4 L583.8 764.8 L579.6 767.2 M585.3 770.2 H591.6" fill="none" stroke="#fff" stroke-width="1.2"/><rect x="618.3" y="756.8" width="23.1" height="27.4" rx="1" fill="#09a3dc"/><rect x="618.3" y="770" width="23.1" height="0.9" fill="#0a6f99"/><rect x="627.2" y="762.2" width="5.6" height="1.4" rx="0.6" fill="#b9c7cf"/><rect x="627.2" y="775.4" width="5.6" height="1.4" rx="0.6" fill="#b9c7cf"/><circle cx="669.9" cy="770.85" r="15.1" fill="#0fa3dc" stroke="#0b7fae" stroke-width="0.5"/><path d="M657.5 764 Q659 759 664 757.3 Q666 759 665 762 Q662 763 661.5 766 Q660 769 657 770Z M667.5 756.8 Q671 756.5 673.5 757.8 Q671.5 761 669 760Z M674 766 Q679 762 683 765 Q684.5 770 683 775 Q680 781 676 783 Q675 778 677 774 Q673 771 674 766Z M675 760 Q679 759 681 762 Q678 763 675 760Z" fill="#5cc6ee"/><path d="M666.2 768 L666.3 785.4 L663.2 782.2 L660.8 786.2 L658.6 785.2 L660.9 781.2 L655 779.3 Z" fill="#f4f7f9"/><rect x="695" y="756.1" width="29.7" height="29.5" rx="2" fill="#d9dadc"/><g fill="#2db5ea"><rect x="697" y="757.8" width="5.2" height="4.6" rx="0.8"/><rect x="704.2" y="757.8" width="5.1" height="4.6" rx="0.8"/><rect x="711.2" y="757.8" width="5" height="4.6" rx="0.8"/><rect x="717.8" y="757.8" width="5.3" height="4.6" rx="0.8"/><rect x="697" y="765" width="5.2" height="4.7" rx="0.8"/><rect x="717.8" y="765" width="5.3" height="4.7" rx="0.8"/><rect x="697" y="772" width="5.2" height="4.6" rx="0.8"/><rect x="697" y="778.9" width="5.2" height="5.3" rx="0.8"/><rect x="704.2" y="778.9" width="5.1" height="5.3" rx="0.8"/></g><path d="M714.8 775.6 L722.1 782.3" stroke="#222c33" stroke-width="2.4" stroke-linecap="round"/><path d="M714.6 775.4 L716.4 777.1" stroke="#d9b61f" stroke-width="2.4"/><circle cx="707.9" cy="768.7" r="7.8" fill="#7fd3f2" stroke="#1a3442" stroke-width="1.5"/><rect x="732.7" y="756.8" width="1.4" height="29" fill="#5a5a5a"/><rect x="739" y="758.4" width="35" height="25.8" rx="1.5" fill="#e8e8e6"/><rect x="740.7" y="760.2" width="31.6" height="22.2" fill="#8c8c8a"/><path d="M740.7 777 Q756 770 772.3 768 V771.5 Q756 772.5 740.7 780Z" fill="#979794"/><path d="M766 784.2 Q772 784 774 778.5 L774 784.2Z" fill="#f3f2f0"/></svg>
<div class="a" style="left:223px;top:374px;width:18px;height:50px;background:rgba(0,0,0,0.5);border-radius:0 4.5px 4.5px 0"></div>
<div class="a" style="left:223px;top:371px;width:15px;height:50px;background:#56637a;border-radius:0 4.5px 4.5px 0"></div>
<svg style="left:0;top:0" width="1" height="1" viewBox="0 0 1 1" preserveAspectRatio="none"></svg>
<svg style="left:0px;top:0px" width="300" height="500" viewBox="0 0 300 500"><rect x="227" y="377" width="2" height="2" rx="0.3" fill="#8b94a4"/><rect x="232" y="377" width="2" height="2" rx="0.3" fill="#8b94a4"/><rect x="227" y="382" width="2" height="2" rx="0.3" fill="#8b94a4"/><rect x="232" y="382" width="2" height="2" rx="0.3" fill="#8b94a4"/><rect x="227" y="387" width="2" height="2" rx="0.3" fill="#8b94a4"/><rect x="232" y="387" width="2" height="2" rx="0.3" fill="#8b94a4"/><rect x="227" y="403" width="2" height="2" rx="0.3" fill="#8b94a4"/><rect x="232" y="403" width="2" height="2" rx="0.3" fill="#8b94a4"/><rect x="227" y="408" width="2" height="2" rx="0.3" fill="#8b94a4"/><rect x="232" y="408" width="2" height="2" rx="0.3" fill="#8b94a4"/><rect x="227" y="413" width="2" height="2" rx="0.3" fill="#8b94a4"/><rect x="232" y="413" width="2" height="2" rx="0.3" fill="#8b94a4"/><path d="M228.8 393.6 L233 396.2 L228.8 398.8Z" fill="#fff" stroke="#fff" stroke-width="1" stroke-linejoin="round"/></svg>
<div class="a" style="left:1081px;top:40px;width:359px;height:860px;background:#1e1e1e"></div>
<div class="a" style="left:1081px;top:40px;width:2px;height:101.8px;background:#3f3421"></div>
<div class="a" style="left:0;top:40px;width:1440px;height:860px;overflow:hidden"><div class="a" style="left:0;top:-40px;width:1440px;height:900px">
<div class="a" style="left:1095.2px;top:31.65px;width:66.8px;height:25.2px;background:#221a2c;border:1px solid #321e4b;border-radius:3px"></div>
<div class="m" style="left:1101.50px;top:32.31px;font-size:9.9px;line-height:12px;color:#6224be;font-weight:700;">#tinyfat-</div>
<div class="m" style="left:1101.50px;top:43.31px;font-size:9.9px;line-height:12px;color:#6224be;font-weight:700;">dev</div>
<svg style="left:1165.80px;top:41.45px" width="7" height="7" viewBox="0 0 7 7"><path d="M3.5 0.75 L6.25 3.5 L3.5 6.25 L0.75 3.5Z" fill="none" stroke="#a8731a" stroke-width="0.65"/><path d="M3.5 1.9 L5.1 3.5 L3.5 5.1 L1.9 3.5Z" fill="#dd971d"/></svg>
<div class="m" style="left:1176.80px;top:37.98px;font-size:10.4px;line-height:13px;color:#969696;font-weight:400;">ambient</div>
<div class="t" style="left:1230.80px;top:32.49px;font-size:9.98px;line-height:12px;letter-spacing:0.422px;color:#6e6e6e;font-weight:400;font-style:normal;">8 messages in last 15min, 3</div>
<div class="t" style="left:1230.80px;top:42.99px;font-size:9.98px;line-height:12px;letter-spacing:0.419px;color:#6e6e6e;font-weight:400;font-style:normal;">participants, you last spoke 352s ago</div>
<div class="m" style="left:1098.30px;top:60.23px;font-size:10.4px;line-height:13px;color:#959595;font-weight:400;">alexgarcia042 (U09V58YC33R): Hotrod, are you also</div>
<div class="m" style="left:1098.30px;top:75.83px;font-size:10.4px;line-height:13px;color:#959595;font-weight:400;">here?</div>
<div class="m" style="left:1098.30px;top:91.43px;font-size:10.4px;line-height:13px;color:#959595;font-weight:400;">alexgarcia042 (U09V58YC33R): &lt;@U0ANGB8H5EH&gt; hey</div>
<div class="m" style="left:1098.30px;top:107.03px;font-size:10.4px;line-height:13px;color:#959595;font-weight:400;">buddy, are you there</div>
<div class="m" style="left:1098.30px;top:122.63px;font-size:10.4px;line-height:13px;color:#959595;font-weight:400;">hotrod (U0ANGB8H5EH): Hey! I&#x27;m here. What&#x27;s up?</div>
<div class="a" style="left:1081px;top:150.0px;width:344px;height:57.9px;background:#222222;border:1px solid #333333;border-radius:3px"></div>
<div class="m" style="left:1089.90px;top:156.74px;font-size:9.6px;line-height:12px;color:#6a6a6a;font-weight:400;">12:02 PM</div>
<div class="a" style="left:1090px;top:176.0px;width:2px;height:24.8px;background:#383838"></div>
<svg style="left:1102px;top:183.50px" width="10" height="9" viewBox="0 0 10 9"><path d="M1.8 6.5 Q1.9 5.6 2.8 5.6 Q3.3 5.7 3.8 6.4 L6.9 1.7 Q7.4 1.3 8.0 1.9 L4.5 7.8 Q4.0 8.4 3.3 8.0 Z" fill="#22c55e"/></svg>
<svg style="left:1119px;top:184.00px" width="10" height="8" viewBox="0 0 10 8"><path d="M1.4 5.05 H8.5 M6.5 3.5 L8.6 5.05 L6.5 6.6" fill="none" stroke="#6a6a6a" stroke-width="0.55"/></svg>
<div class="m" style="left:1134.00px;top:181.60px;font-size:12px;line-height:15px;color:#ababab;font-weight:400;">yield_no_action</div>
<svg style="left:1400px;top:183.50px" width="9" height="9" viewBox="0 0 9 9"><path d="M4.2 0.8 V7.6 M0.8 4.2 H7.6" stroke="#6a6a6a" stroke-width="0.8"/></svg>
<div class="a" style="left:1081px;top:215.95px;width:2px;height:114.0px;background:#3f3421"></div>
<div class="a" style="left:1095.2px;top:220.05px;width:66.8px;height:25.2px;background:#221a2c;border:1px solid #321e4b;border-radius:3px"></div>
<div class="m" style="left:1101.50px;top:220.71px;font-size:9.9px;line-height:12px;color:#6224be;font-weight:700;">#tinyfat-</div>
<div class="m" style="left:1101.50px;top:231.71px;font-size:9.9px;line-height:12px;color:#6224be;font-weight:700;">dev</div>
<svg style="left:1165.80px;top:229.85px" width="7" height="7" viewBox="0 0 7 7"><path d="M3.5 0.75 L6.25 3.5 L3.5 6.25 L0.75 3.5Z" fill="none" stroke="#a8731a" stroke-width="0.65"/><path d="M3.5 1.9 L5.1 3.5 L3.5 5.1 L1.9 3.5Z" fill="#dd971d"/></svg>
<div class="m" style="left:1176.80px;top:226.38px;font-size:10.4px;line-height:13px;color:#969696;font-weight:400;">ambient</div>
<div class="t" style="left:1230.80px;top:220.89px;font-size:9.98px;line-height:12px;letter-spacing:0.422px;color:#6e6e6e;font-weight:400;font-style:normal;">9 messages in last 15min, 3</div>
<div class="t" style="left:1230.80px;top:231.39px;font-size:9.98px;line-height:12px;letter-spacing:0.419px;color:#6e6e6e;font-weight:400;font-style:normal;">participants, you last spoke 530s ago</div>
<div class="m" style="left:1098.30px;top:248.63px;font-size:10.4px;line-height:13px;color:#959595;font-weight:400;">alexgarcia042 (U09V58YC33R): &lt;@U0ANGB8H5EH&gt; hey</div>
<div class="m" style="left:1098.30px;top:264.23px;font-size:10.4px;line-height:13px;color:#959595;font-weight:400;">buddy, are you there</div>
<div class="m" style="left:1098.30px;top:279.83px;font-size:10.4px;line-height:13px;color:#959595;font-weight:400;">hotrod (U0ANGB8H5EH): Hey! I&#x27;m here. What&#x27;s up?</div>
<div class="m" style="left:1098.30px;top:295.43px;font-size:10.4px;line-height:13px;color:#959595;font-weight:400;">alexgarcia042 (U09V58YC33R): Can I get a fun fact</div>
<div class="m" style="left:1098.30px;top:311.03px;font-size:10.4px;line-height:13px;color:#959595;font-weight:400;">about cats from each of you</div>
<div class="a" style="left:1081px;top:338.06px;width:344px;height:116.96px;background:#222222;border:1px solid #333333;border-radius:3px"></div>
<div class="m" style="left:1089.90px;top:344.34px;font-size:9.6px;line-height:12px;color:#6a6a6a;font-weight:400;">12:05 PM</div>
<div class="t" style="left:1090.00px;top:364.10px;font-size:14.14px;line-height:18px;letter-spacing:0.656px;color:#e4e4e4;"><span style="font-style:normal">Cats have a </span><span style="font-style:italic">vocabulary mismatch</span><span style="font-style:normal"> with</span></div>
<div class="t" style="left:1090.00px;top:385.70px;font-size:14.14px;line-height:18px;letter-spacing:0.685px;color:#e4e4e4;"><span style="font-style:normal">humans: adult cats mostly meow at us, not</span></div>
<div class="t" style="left:1090.00px;top:407.30px;font-size:14.14px;line-height:18px;letter-spacing:0.592px;color:#e4e4e4;"><span style="font-style:normal">each other. They basically developed a custom</span></div>
<div class="t" style="left:1090.00px;top:428.90px;font-size:14.14px;line-height:18px;letter-spacing:0.592px;color:#e4e4e4;"><span style="font-style:normal">interface because we’re big hairless idiots.</span></div>
<div class="a" style="left:1081px;top:462.95px;width:2px;height:316.8px;background:#3f3421"></div>
<div class="a" style="left:1095.2px;top:467.05px;width:66.8px;height:25.2px;background:#221a2c;border:1px solid #321e4b;border-radius:3px"></div>
<div class="m" style="left:1101.50px;top:467.71px;font-size:9.9px;line-height:12px;color:#6224be;font-weight:700;">#tinyfat-</div>
<div class="m" style="left:1101.50px;top:478.71px;font-size:9.9px;line-height:12px;color:#6224be;font-weight:700;">dev</div>
<svg style="left:1165.80px;top:476.85px" width="7" height="7" viewBox="0 0 7 7"><path d="M3.5 0.75 L6.25 3.5 L3.5 6.25 L0.75 3.5Z" fill="none" stroke="#a8731a" stroke-width="0.65"/><path d="M3.5 1.9 L5.1 3.5 L3.5 5.1 L1.9 3.5Z" fill="#dd971d"/></svg>
<div class="m" style="left:1176.80px;top:473.38px;font-size:10.4px;line-height:13px;color:#969696;font-weight:400;">ambient</div>
<div class="t" style="left:1230.80px;top:467.89px;font-size:9.98px;line-height:12px;letter-spacing:0.454px;color:#6e6e6e;font-weight:400;font-style:normal;">11 messages in last 15min, 3</div>
<div class="t" style="left:1230.80px;top:478.39px;font-size:9.98px;line-height:12px;letter-spacing:0.415px;color:#6e6e6e;font-weight:400;font-style:normal;">participants, you last spoke 27s ago</div>
<div class="m" style="left:1098.30px;top:495.63px;font-size:10.4px;line-height:13px;color:#959595;font-weight:400;">hotrod (U0ANGB8H5EH): Hey! I&#x27;m here. What&#x27;s up?</div>
<div class="m" style="left:1098.30px;top:511.23px;font-size:10.4px;line-height:13px;color:#959595;font-weight:400;">alexgarcia042 (U09V58YC33R): Can I get a fun fact</div>
<div class="m" style="left:1098.30px;top:526.83px;font-size:10.4px;line-height:13px;color:#959595;font-weight:400;">about cats from each of you</div>
<div class="m" style="left:1098.30px;top:542.43px;font-size:10.4px;line-height:13px;color:#959595;font-weight:400;">zip (U0A06NNJV34): Cats have a *vocabulary</div>
<div class="m" style="left:1098.30px;top:558.03px;font-size:10.4px;line-height:13px;color:#959595;font-weight:400;">mismatch* with humans: adult cats mostly meow at</div>
<div class="m" style="left:1098.30px;top:573.63px;font-size:10.4px;line-height:13px;color:#959595;font-weight:400;">us, not each other. They basically developed a</div>
<div class="m" style="left:1098.30px;top:589.23px;font-size:10.4px;line-height:13px;color:#959595;font-weight:400;">custom interface because we’re big hairless</div>
<div class="m" style="left:1098.30px;top:604.83px;font-size:10.4px;line-height:13px;color:#959595;font-weight:400;">idiots.</div>
<div class="m" style="left:1098.30px;top:620.43px;font-size:10.4px;line-height:13px;color:#959595;font-weight:400;">zip (U0A06NNJV34): Cats have a _vocabulary</div>
<div class="m" style="left:1098.30px;top:636.03px;font-size:10.4px;line-height:13px;color:#959595;font-weight:400;">mismatch_ with humans: adult cats mostly meow at</div>
<div class="m" style="left:1098.30px;top:651.63px;font-size:10.4px;line-height:13px;color:#959595;font-weight:400;">us, not each other. They basically developed a</div>
<div class="m" style="left:1098.30px;top:667.23px;font-size:10.4px;line-height:13px;color:#959595;font-weight:400;">custom interface because we’re big hairless</div>
<div class="m" style="left:1098.30px;top:682.83px;font-size:10.4px;line-height:13px;color:#959595;font-weight:400;">idiots.</div>
<div class="m" style="left:1098.30px;top:698.43px;font-size:10.4px;line-height:13px;color:#959595;font-weight:400;">hotrod (U0ANGB8H5EH): Cats have a specialized</div>
<div class="m" style="left:1098.30px;top:714.03px;font-size:10.4px;line-height:13px;color:#959595;font-weight:400;">collarbone that&#x27;s not connected to other bones,</div>
<div class="m" style="left:1098.30px;top:729.63px;font-size:10.4px;line-height:13px;color:#959595;font-weight:400;">which lets them squeeze through surprisingly tight</div>
<div class="m" style="left:1098.30px;top:745.23px;font-size:10.4px;line-height:13px;color:#959595;font-weight:400;">spaces—basically they&#x27;re liquid when they want to</div>
<div class="m" style="left:1098.30px;top:760.83px;font-size:10.4px;line-height:13px;color:#959595;font-weight:400;">be.</div>
<div class="a" style="left:1081px;top:787.75px;width:344px;height:57.9px;background:#222222;border:1px solid #333333;border-radius:3px"></div>
<div class="m" style="left:1089.90px;top:794.49px;font-size:9.6px;line-height:12px;color:#6a6a6a;font-weight:400;">12:06 PM</div>
<div class="a" style="left:1090px;top:813.75px;width:2px;height:24.8px;background:#383838"></div>
<svg style="left:1102px;top:821.25px" width="10" height="9" viewBox="0 0 10 9"><path d="M1.8 6.5 Q1.9 5.6 2.8 5.6 Q3.3 5.7 3.8 6.4 L6.9 1.7 Q7.4 1.3 8.0 1.9 L4.5 7.8 Q4.0 8.4 3.3 8.0 Z" fill="#22c55e"/></svg>
<svg style="left:1119px;top:821.75px" width="10" height="8" viewBox="0 0 10 8"><path d="M1.4 5.05 H8.5 M6.5 3.5 L8.6 5.05 L6.5 6.6" fill="none" stroke="#6a6a6a" stroke-width="0.55"/></svg>
<div class="m" style="left:1134.00px;top:819.35px;font-size:12px;line-height:15px;color:#ababab;font-weight:400;">yield_no_action</div>
<svg style="left:1400px;top:821.25px" width="9" height="9" viewBox="0 0 9 9"><path d="M4.2 0.8 V7.6 M0.8 4.2 H7.6" stroke="#6a6a6a" stroke-width="0.8"/></svg>
</div></div>
<div class="a" style="left:1425px;top:40px;width:15px;height:814px;background:#fcfcfc"></div>
<svg style="left:1425px;top:40px" width="15" height="814"><path d="M3 10.9L7.5 6.4L12 10.9Z" fill="#8c8c8c"/><rect x="3" y="759" width="9" height="37" rx="4.5" fill="#8c8c8c"/><path d="M3 801.7L7.5 806.3L12 801.7Z" fill="#8c8c8c"/></svg>
<div class="a" style="left:1081px;top:854px;width:359px;height:46px;background:#1e1e1e;border-top:1px solid #353535"></div>
<div class="t" style="left:1092.60px;top:867.85px;font-size:14.56px;line-height:18px;letter-spacing:0.414px;color:#8a8a8a;font-weight:400;font-style:normal;">Type a message...</div>
<svg style="left:1370px;top:860px" width="70" height="40"><path d="M10.85 19.96 H21.1 M15.8 15.04 L21.1 19.96 L15.8 24.9" fill="none" stroke="#474747" stroke-width="1.15" stroke-linecap="round" stroke-linejoin="round"/><rect x="43.97" y="12.87" width="4.05" height="9.26" rx="2.02" fill="#8f8f8f"/><path d="M40.94 19.24 A5.06 5.06 0 0 0 51.06 19.24 M46 24.6 V27.2" fill="none" stroke="#8f8f8f" stroke-width="1.6" stroke-linecap="round"/></svg>
</body></html>
